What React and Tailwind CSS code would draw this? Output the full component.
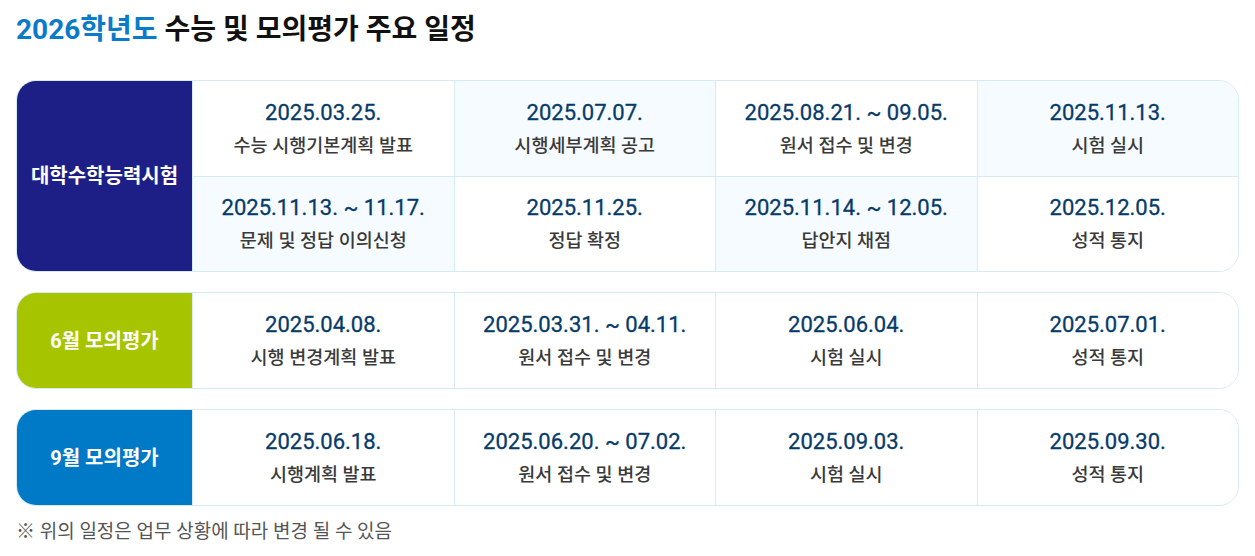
import React from "react";

const font = { fontFamily: 'Roboto, "Noto Sans CJK KR", sans-serif' };

const groups = [
  {
    label: "대학수학능력시험",
    color: "bg-[#1d1f86]",
    rows: [
      [
        ["2025.03.25.", "수능 시행기본계획 발표"],
        ["2025.07.07.", "시행세부계획 공고"],
        ["2025.08.21. ~ 09.05.", "원서 접수 및 변경"],
        ["2025.11.13.", "시험 실시"],
      ],
      [
        ["2025.11.13. ~ 11.17.", "문제 및 정답 이의신청"],
        ["2025.11.25.", "정답 확정"],
        ["2025.11.14. ~ 12.05.", "답안지 채점"],
        ["2025.12.05.", "성적 통지"],
      ],
    ],
    striped: true,
  },
  {
    label: "6월 모의평가",
    color: "bg-[#a6c500]",
    rows: [
      [
        ["2025.04.08.", "시행 변경계획 발표"],
        ["2025.03.31. ~ 04.11.", "원서 접수 및 변경"],
        ["2025.06.04.", "시험 실시"],
        ["2025.07.01.", "성적 통지"],
      ],
    ],
  },
  {
    label: "9월 모의평가",
    color: "bg-[#0079c6]",
    rows: [
      [
        ["2025.06.18.", "시행계획 발표"],
        ["2025.06.20. ~ 07.02.", "원서 접수 및 변경"],
        ["2025.09.03.", "시험 실시"],
        ["2025.09.30.", "성적 통지"],
      ],
    ],
  },
];

function Cell({ date, text, tinted, topBorder }) {
  return (
    <div
      className={
        "h-[95px] flex flex-col items-center justify-center border-l border-[#d7e9f2] " +
        (topBorder ? "border-t " : "") +
        (tinted ? "bg-[#f5fbfe]" : "bg-white")
      }
    >
      <div className="text-[22px] leading-[34px] text-[#063b69] [-webkit-text-stroke:0.3px_#063b69]">{date}</div>
      <div className="text-[18.5px] leading-[32px] font-medium text-[#3a3a3a]">{text}</div>
    </div>
  );
}

export default function App() {
  return (
    <div className="bg-white w-[1255px] h-[556px] px-4 pt-[11px]" style={font}>
      <h1 className="text-[28px] leading-[38px] font-bold text-[#111]">
        <span className="text-[#0a7bc9]">2026학년도</span> 수능 및 모의평가 주요 일정
      </h1>

      <div className="mt-[31px] flex flex-col gap-[20px]">
        {groups.map((g) => (
          <div
            key={g.label}
            className="flex rounded-[20px] border border-[#d7e9f2] overflow-hidden"
          >
            <div
              className={
                "w-[175px] shrink-0 flex items-center justify-center text-white text-[20px] font-bold " +
                g.color
              }
            >
              {g.label}
            </div>
            <div className="flex-1 grid grid-cols-4">
              {g.rows.map((row, ri) =>
                row.map(([d, t], ci) => (
                  <Cell
                    key={ri + "-" + ci}
                    date={d}
                    text={t}
                    topBorder={ri > 0}
                    tinted={g.striped && (ri + ci) % 2 === 1}
                  />
                ))
              )}
            </div>
          </div>
        ))}
      </div>

      <p className="mt-[12px] text-[19px] leading-[28px] text-[#555]">
        ※ 위의 일정은 업무 상황에 따라 변경 될 수 있음
      </p>
    </div>
  );
}
